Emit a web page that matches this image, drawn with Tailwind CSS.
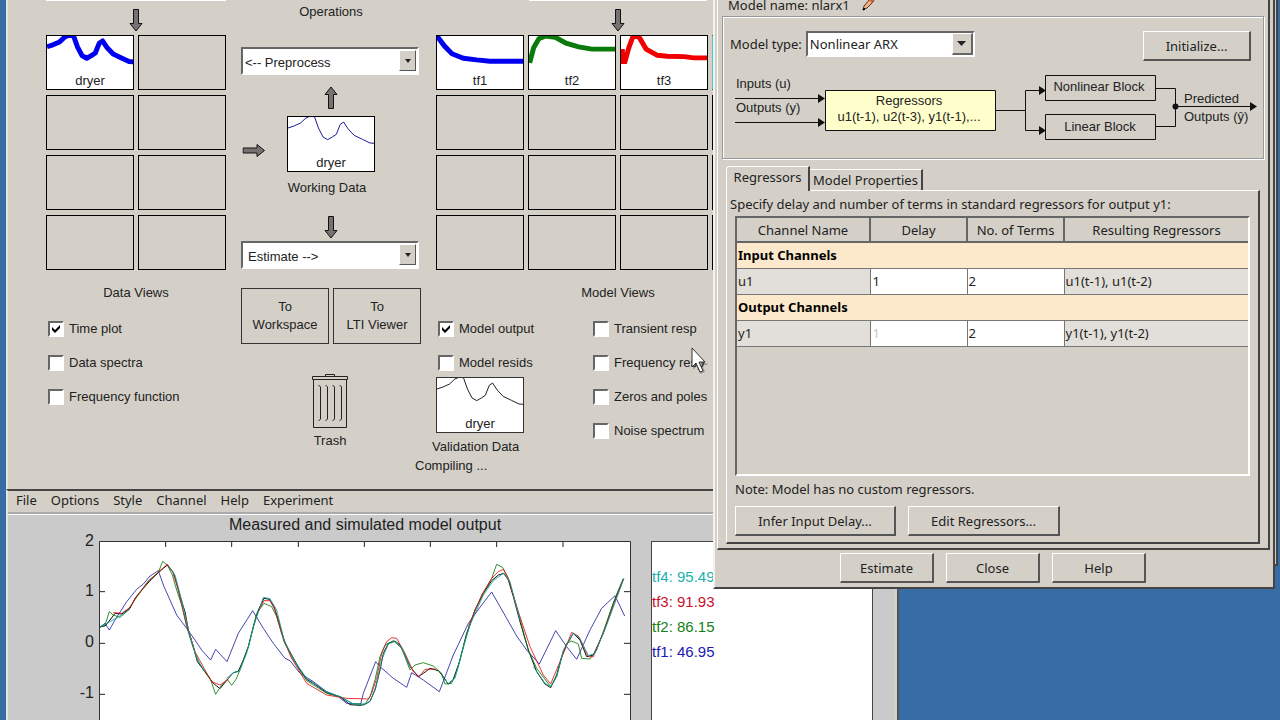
<!DOCTYPE html>
<html lang="en" class="h-full">
<head>
    <meta charset="UTF-8">
    <meta name="viewport" content="width=device-width, initial-scale=1.0">
    <title>System Identification - Nonlinear Models</title>
    <script src="https://cdn.jsdelivr.net/npm/@tailwindcss/browser@4"></script>
</head>
<body class="relative h-screen overflow-hidden bg-[#386ca5] font-['Liberation_Sans',Arial,sans-serif] text-[13px] leading-[18px] text-[#222]">

    <!-- Shared drawings -->
    <svg class="hidden">
        <symbol id="arrow-down" viewBox="0 0 14 23"><path d="M4.500.5h5v14h3.500L7 22 1 14.500h3.500z" fill="#767272" stroke="#111"/></symbol>
        <symbol id="dryer" viewBox="0 0 260 162" preserveAspectRatio="none"><path d="M0 33 18 27 38 18 54 3 66-2 80-1 92 33 106 60 120 68 134 60 146 52 158 22 168 15 182 36 200 55 225 67 248 78 262 79" fill="none" stroke="currentColor" stroke-linejoin="round"/></symbol>
        <symbol id="check" viewBox="0 0 16 16"><path d="M4 6v3l3 3 5-5V4L7 9z" fill="#000"/></symbol>
    </svg>

    <!-- Identification window -->
    <main class="absolute top-0 right-[2px] left-[6px] h-[566px] border-r-2 border-b-2 border-l-2 border-r-[#444] border-b-[#444] border-l-[#e6e4e0] bg-[#d4d0c8]">
        <div class="flex gap-[15px] pl-[38px]">
            <section class="w-[180px] shrink-0">
                <div class="h-px bg-white"></div>
                <svg class="mx-auto mt-2 h-[23px] w-[14px]"><use href="#arrow-down"/></svg>
                <div class="mt-[3px] grid grid-cols-2 gap-x-1 gap-y-[5px]">
                    <div class="relative h-[55px] border border-black bg-white">
                        <svg class="h-full w-full text-[#0000f0] [stroke-width:15]"><use href="#dryer"/></svg>
                        <span class="absolute inset-x-0 -bottom-px text-center">dryer</span>
                    </div>
                    <div class="h-[55px] border border-black"></div>
                    <div class="h-[55px] border border-black"></div>
                    <div class="h-[55px] border border-black"></div>
                    <div class="h-[55px] border border-black"></div>
                    <div class="h-[55px] border border-black"></div>
                    <div class="h-[55px] border border-black"></div>
                    <div class="h-[55px] border border-black"></div>
                </div>
                <h2 class="mt-[14px] text-center">Data Views</h2>
                <div class="mt-[18px] flex flex-col gap-4 pl-[2px]">
                    <label class="flex items-center gap-[5px]"><span class="relative h-4 w-4"><input type="checkbox" checked class="block h-4 w-4 appearance-none border-2 border-t-[#666] border-r-white border-b-white border-l-[#666] bg-white"><svg class="absolute inset-0 h-4 w-4"><use href="#check"/></svg></span>Time plot</label>
                    <label class="flex items-center gap-[5px]"><input type="checkbox" class="h-4 w-4 appearance-none border-2 border-t-[#666] border-r-white border-b-white border-l-[#666] bg-white">Data spectra</label>
                    <label class="flex items-center gap-[5px]"><input type="checkbox" class="h-4 w-4 appearance-none border-2 border-t-[#666] border-r-white border-b-white border-l-[#666] bg-white">Frequency function</label>
                </div>
            </section>

            <section class="w-[180px] shrink-0">
                <h2 class="pt-[3px] text-center">Operations</h2>
                <div class="relative mt-[26px] mr-[2px] h-7">
                    <select aria-label="Preprocess" class="h-full w-full appearance-none border-2 border-t-[#666] border-r-white border-b-white border-l-[#666] bg-white pt-1 pl-[2px]"><option>&lt;-- Preprocess</option></select>
                    <span class="pointer-events-none absolute top-[3px] right-[3px] flex h-[21px] w-[17px] items-center justify-center border border-t-white border-r-[#555] border-b-[#555] border-l-white bg-[#d4d0c8]"><svg class="h-1 w-[6px]" viewBox="0 0 6 4"><path d="M0 0h6L3 4z" fill="#222"/></svg></span>
                </div>
                <svg class="mx-auto mt-[11px] h-[23px] w-[14px] rotate-180"><use href="#arrow-down"/></svg>
                <div class="mt-[7px] flex items-center">
                    <svg class="mr-[26px] ml-[6px] h-[23px] w-[14px] translate-y-[6px] -rotate-90"><use href="#arrow-down"/></svg>
                    <div class="relative h-[56px] w-[88px] border border-black bg-white">
                        <svg class="h-full w-full text-[#1a1a99] [stroke-width:3]"><use href="#dryer"/></svg>
                        <span class="absolute inset-x-0 -bottom-px text-center">dryer</span>
                    </div>
                </div>
                <p class="mt-[7px] pr-2 text-center">Working Data</p>
                <svg class="mx-auto mt-[19px] h-[23px] w-[14px]"><use href="#arrow-down"/></svg>
                <div class="relative mt-[2px] mr-[2px] h-7">
                    <select aria-label="Estimate" class="h-full w-full appearance-none border-2 border-t-[#666] border-r-white border-b-white border-l-[#666] bg-white pt-1 pl-[5px]"><option>Estimate --&gt;</option></select>
                    <span class="pointer-events-none absolute top-[3px] right-[3px] flex h-[21px] w-[17px] items-center justify-center border border-t-white border-r-[#555] border-b-[#555] border-l-white bg-[#d4d0c8]"><svg class="h-1 w-[6px]" viewBox="0 0 6 4"><path d="M0 0h6L3 4z" fill="#222"/></svg></span>
                </div>
                <div class="mt-[19px] grid grid-cols-2 gap-1">
                    <button class="h-14 border border-[#333]">To<br>Workspace</button>
                    <button class="h-14 border border-[#333]">To<br>LTI Viewer</button>
                </div>
                <svg class="mx-auto mt-[29px] h-[56px] w-[38px]" viewBox="0 0 38 56" fill="none" stroke="#222">
                    <path d="M13.500 3.500v-2h9v2M.5 3.500h35v3h-35zM1.500 6.500v48h33v-48M6.500 12l2 2v32l-2 2M13.500 12l2 2v32l-2 2M20.500 12l2 2v32l-2 2M27.500 12l2 2v32l-2 2"/>
                </svg>
                <p class="mt-[3px] pr-[2px] text-center">Trash</p>
            </section>

            <section class="w-[364px] shrink-0">
                <div class="mx-auto h-px w-[178px] bg-white"></div>
                <svg class="mx-auto mt-2 h-[23px] w-[14px]"><use href="#arrow-down"/></svg>
                <div class="mt-[3px] grid grid-cols-4 gap-x-1 gap-y-[5px]">
                    <div class="relative h-[55px] border border-black bg-white">
                        <svg class="h-full w-full" viewBox="0 0 260 162" preserveAspectRatio="none"><path d="M0 0 22 30 45 54 80 68 120 73 160 77H262" fill="none" stroke="#0000f0" stroke-width="15"/></svg>
                        <span class="absolute inset-x-0 -bottom-px text-center">tf1</span>
                    </div>
                    <div class="relative h-[55px] border border-black bg-white">
                        <svg class="h-full w-full" viewBox="0 0 260 162" preserveAspectRatio="none"><path d="M2 82 14 36 30 8 50 0 80 4 112 22 150 33 190 40H262" fill="none" stroke="#0a7a0a" stroke-width="15"/></svg>
                        <span class="absolute inset-x-0 -bottom-px text-center">tf2</span>
                    </div>
                    <div class="relative h-[55px] border border-black bg-white">
                        <svg class="h-full w-full" viewBox="0 0 260 162" preserveAspectRatio="none"><path d="M4 40 5 78 12 78 24 35 36 2 54 2 76 40 110 59 140 62 190 63 220 67H262" fill="none" stroke="#f00000" stroke-width="15"/></svg>
                        <span class="absolute inset-x-0 -bottom-px text-center">tf3</span>
                    </div>
                    <div class="h-[55px] border border-black border-l-[#4cc] bg-white"></div>
                    <div class="h-[55px] border border-black"></div>
                    <div class="h-[55px] border border-black"></div>
                    <div class="h-[55px] border border-black"></div>
                    <div class="h-[55px] border border-black"></div>
                    <div class="h-[55px] border border-black"></div>
                    <div class="h-[55px] border border-black"></div>
                    <div class="h-[55px] border border-black"></div>
                    <div class="h-[55px] border border-black"></div>
                    <div class="h-[55px] border border-black"></div>
                    <div class="h-[55px] border border-black"></div>
                    <div class="h-[55px] border border-black"></div>
                    <div class="h-[55px] border border-black"></div>
                </div>
                <h2 class="mt-[14px] text-center">Model Views</h2>
                <div class="mt-[18px] flex gap-[53px]">
                    <div class="flex w-[104px] flex-col whitespace-nowrap">
                        <label class="flex items-center gap-[5px] pl-[2px]"><span class="relative h-4 w-4"><input type="checkbox" checked class="block h-4 w-4 appearance-none border-2 border-t-[#666] border-r-white border-b-white border-l-[#666] bg-white"><svg class="absolute inset-0 h-4 w-4"><use href="#check"/></svg></span>Model output</label>
                        <label class="mt-4 flex items-center gap-[5px] pl-[2px]"><input type="checkbox" class="h-4 w-4 appearance-none border-2 border-t-[#666] border-r-white border-b-white border-l-[#666] bg-white">Model resids</label>
                        <div class="relative mt-[5px] h-[56px] w-[88px] border border-[#333] bg-white">
                            <svg class="h-full w-full text-[#222] [stroke-width:3]"><use href="#dryer"/></svg>
                            <span class="absolute inset-x-0 -bottom-px text-center">dryer</span>
                        </div>
                        <p class="mt-[5px] -ml-1">Validation Data</p>
                    </div>
                    <div class="flex flex-col gap-4 whitespace-nowrap">
                        <label class="flex items-center gap-[5px]"><input type="checkbox" class="h-4 w-4 appearance-none border-2 border-t-[#666] border-r-white border-b-white border-l-[#666] bg-white">Transient resp</label>
                        <label class="flex items-center gap-[5px]"><input type="checkbox" class="h-4 w-4 appearance-none border-2 border-t-[#666] border-r-white border-b-white border-l-[#666] bg-white">Frequency resp</label>
                        <label class="flex items-center gap-[5px]"><input type="checkbox" class="h-4 w-4 appearance-none border-2 border-t-[#666] border-r-white border-b-white border-l-[#666] bg-white">Zeros and poles</label>
                        <label class="flex items-center gap-[5px]"><input type="checkbox" class="h-4 w-4 appearance-none border-2 border-t-[#666] border-r-white border-b-white border-l-[#666] bg-white">Noise spectrum</label>
                    </div>
                </div>
            </section>
        </div>
        <p class="pt-px pl-[407px]">Compiling ...</p>
    </main>

    <!-- Model output window -->
    <section class="absolute top-[489px] bottom-0 left-[6px] w-[893px] border-t-2 border-r-2 border-l-2 border-t-[#444] border-r-[#555] border-l-[#e6e4e0] bg-[#d4d0c8]">
        <nav class="flex h-[21px] items-start gap-[14px] pl-2 font-['Noto_Sans','DejaVu_Sans',sans-serif] text-[13px]">
            <button>File</button>
            <button>Options</button>
            <button>Style</button>
            <button>Channel</button>
            <button>Help</button>
            <button>Experiment</button>
        </nav>
        <div class="mr-[3px] flex h-[215px] border-t-2 border-t-[#aaa] bg-[#cacaca] text-base shadow-[inset_0_1px_0_#fff]">
            <div class="w-[87px] shrink-0 pt-[18px] pr-[1px] text-right leading-[18px]">
                <p>2</p>
                <p class="mt-8">1</p>
                <p class="mt-[33px]">0</p>
                <p class="mt-[33px]">-1</p>
            </div>
            <div class="ml-1 w-[532px] shrink-0">
                <h2 class="pt-[2px] text-center leading-[18px]">Measured and simulated model output</h2>
                <svg class="mt-[7px] h-[190px] w-[532px]" viewBox="57 93 1596 570" fill="none" stroke-width="3">
                    <path fill="#fff" stroke="#333" d="M58.500 94.500h1593v700H58.500z"/>
                    <path stroke="#222" d="M257 96v15M455 96v15M655 96v15M853 96v15M1051 96v15M1250 96v15M1449 96v15M60 245h15M60 400h15M60 553h15M1632 245h18M1632 400h18M1632 553h18"/>
                    <path stroke="#111" d="M60 350 75 348 90 330 105 310 125 312 150 295 165 265 190 235 210 212 235 188 250 175 262 165 280 187 290 220 300 260 315 305 325 360 340 410 352 455 375 485 400 520 420 536 445 505 460 488 475 484 490 450 505 410 520 350 535 300 552 265 568 268 582 290 595 330 615 400 635 435 660 480 680 508 700 520 740 548 780 560 810 584 840 586 853 584 870 574 885 540 900 480 910 430 925 400 945 393 960 405 975 435 990 470 1015 500 1030 490 1050 475 1075 482 1090 500 1105 523 1120 508 1140 450 1160 370 1185 300 1210 250 1235 212 1255 195 1272 190 1285 210 1300 260 1320 335 1345 420 1370 485 1395 522 1412 533 1430 495 1445 440 1460 405 1480 370 1500 390 1520 440 1540 435 1570 370 1600 280 1630 208"/>
                    <path stroke="#2020a0" stroke-width="2.500" d="M60 352 75 340 88 360 105 330 140 275 170 238 190 222 210 198 235 182 250 225 290 315 320 355 345 390 365 420 392 450 407 418 441 455 475 370 518 302 550 355 580 400 615 445 630 452 660 490 700 515 740 545 775 560 800 580 842 582 850 550 887 455 900 470 940 505 980 532 995 488 1030 510 1078 545 1120 435 1165 340 1205 285 1235 246 1280 325 1310 378 1340 420 1378 462 1427 362 1460 410 1490 448 1530 360 1565 295 1605 257 1634 318"/>
                    <path stroke="#0a7a0a" stroke-width="2.500" d="M60 352 75 345 88 305 100 315 120 322 140 305 170 262 205 212 235 188 248 154 262 165 277 195 290 240 305 285 320 350 340 415 360 465 392 510 407 553 425 525 442 508 455 526 468 508 480 480 505 410 530 310 552 280 575 290 590 320 612 395 640 450 680 512 740 550 785 562 820 582 855 582 870 560 885 510 900 440 915 405 940 392 965 415 990 480 1005 465 1030 458 1060 468 1085 490 1095 522 1115 520 1132 480 1155 390 1185 300 1215 240 1235 205 1250 163 1268 172 1285 205 1310 290 1345 420 1370 475 1412 530 1430 500 1450 425 1460 400 1475 393 1495 402 1505 445 1530 447 1550 420 1575 350 1605 265 1630 205"/>
                    <path stroke="#e01010" stroke-width="2.500" d="M100 308 125 310 150 292 170 258 205 215 235 186 262 163 278 185 295 240 320 345 345 425 375 480 395 515 420 525 445 508M535 305 552 272 570 272 585 300 605 370 632 440 680 520 740 555 800 565 865 567 875 550 890 505 905 430 920 395 935 383 950 385 975 430 1000 485 1018 500 1035 478 1065 477M1165 350 1205 255 1235 205 1255 185 1270 178 1285 205 1310 290 1350 410 1390 495 1412 522 1440 455 1475 367 1495 378 1510 410 1525 440 1540 440 1575 355 1630 208"/>
                    <path stroke="#10a0a0" stroke-width="2.500" d="M60 350 90 335 125 315 150 298M265 170 285 195 305 270 325 358 350 445 375 485M440 505 460 488 478 484 500 430 522 345 550 262 570 266 590 300 612 390 645 455 680 505 740 545 785 562 815 580 850 584 870 574 888 530 905 450 925 402 945 394 965 412 990 470M1085 500 1105 520 1125 505 1145 430 1170 345 1210 255 1240 212 1270 190 1290 215 1320 330M1360 470 1395 520 1412 530 1430 500 1450 420 1480 370 1500 385 1525 437 1545 430 1580 345 1632 205"/>
                </svg>
            </div>
            <div class="mt-[27px] ml-5 w-[222px] shrink-0 border border-[#444] bg-white pt-[22px] text-[15px] leading-[25px]">
                <p class="text-[#20b0b0]">tf4: 95.49</p>
                <p class="text-[#c8102c]">tf3: 91.93</p>
                <p class="text-[#148014]">tf2: 86.15</p>
                <p class="text-[#2018b8]">tf1: 46.95</p>
            </div>
        </div>
    </section>

    <!-- Nonlinear models dialog -->
    <section class="absolute top-0 left-[713px] w-[562px] border-r-2 border-b-2 border-l-2 border-r-[#444] border-b-[#444] border-l-[#f4f2ee] bg-[#d4d0c8] font-['Noto_Sans','DejaVu_Sans',sans-serif] text-[13px]">
        <div class="mr-[3px] ml-[2px] border-r-2 border-b-2 border-l border-r-[#444] border-b-[#444] border-l-white px-[4px] pb-[4px]">
            <div class="-mt-1 flex h-5 items-start gap-3 pl-[6px]">
                <span>Model name: nlarx1</span>
                <svg class="mt-[2px] h-[13px] w-[13px]" viewBox="0 0 13 13"><path d="M1 12l1-4 6-7q3-1 4 2l-7 7z" fill="#f0b080" stroke="#553322"/><path d="M8 1q3-1 4 2l-2 2-3-3z" fill="#c86030"/><path d="M1 12l2-1-1-1z" stroke="#000"/></svg>
            </div>
            <div class="border border-[#999] shadow-[inset_1px_1px_0_#fff,1px_1px_0_#fff]">
                <div class="flex items-start justify-between pt-[14px] pr-3 pl-[7px]">
                    <div class="flex items-center gap-1">
                        <label for="model-type">Model type:</label>
                        <div class="relative h-[26px] w-[169px]">
                            <select id="model-type" class="h-full w-full appearance-none border-2 border-t-[#666] border-r-white border-b-white border-l-[#666] bg-white pl-[2px]"><option>Nonlinear ARX</option></select>
                            <span class="pointer-events-none absolute top-[2px] right-[2px] flex h-[22px] w-[21px] items-center justify-center border-t border-r-2 border-b-2 border-l border-t-white border-r-[#666] border-b-[#666] border-l-white bg-[#d4d0c8]"><svg class="h-[5px] w-[9px]" viewBox="0 0 9 5"><path d="M0 0h9L4.500 5z" fill="#222"/></svg></span>
                        </div>
                    </div>
                    <button class="h-[30px] w-[108px] border-t border-r-2 border-b-2 border-l border-t-white border-r-[#555] border-b-[#555] border-l-white">Initialize...</button>
                </div>
                <svg class="mt-3 ml-[7px] h-[85px] w-[530px] font-['Liberation_Sans',Arial,sans-serif] text-[13px]" viewBox="730 73 530 85" fill="none" stroke="#111">
                    <path d="M735 98.500h84M735 122.500h84M996 110.500h30M1041 90.500h-15.500v40H1041M1156 88.500h19.500v38H1156M1176 106.500h75"/>
                    <path fill="#111" stroke="none" d="M818 94l7 4.500-7 4.500zM818 118l7 4.500-7 4.500zM1039 86l7 4.500-7 4.500zM1039 126l7 4.500-7 4.500zM1250 102l7 4.500-7 4.500z"/>
                    <circle cx="1175.500" cy="106.500" r="3" fill="#111" stroke="none"/>
                    <path fill="#ffffcc" d="M825.500 90.500h170v40h-170z"/>
                    <path d="M1045.500 75.500h110v25h-110zM1045.500 114.500h110v25h-110z"/>
                    <g fill="#222" stroke="none">
                        <text x="736" y="88">Inputs (u)</text>
                        <text x="736" y="112">Outputs (y)</text>
                        <text x="909" y="105" text-anchor="middle">Regressors</text>
                        <text x="909" y="121" text-anchor="middle">u1(t-1), u2(t-3), y1(t-1),...</text>
                        <text x="1099" y="91" text-anchor="middle">Nonlinear Block</text>
                        <text x="1100" y="131" text-anchor="middle">Linear Block</text>
                        <text x="1184" y="103">Predicted</text>
                        <text x="1184" y="121">Outputs (ŷ)</text>
                    </g>
                </svg>
            </div>

            <div role="tablist" class="mt-[7px] ml-1 flex items-end">
                <button role="tab" aria-selected="true" class="-mb-px h-[25px] w-[84px] rounded-tl border-t border-r-2 border-l border-t-white border-r-[#444] border-l-white bg-[#d4d0c8] pb-1">Regressors</button>
                <button role="tab" class="h-[21px] w-[113px] border-t border-r-2 border-t-white border-r-[#444]">Model Properties</button>
            </div>
            <div class="mr-1 ml-1 border-t border-r-2 border-b-2 border-l border-t-white border-r-[#444] border-b-[#444] border-l-white px-2 pt-1 pb-[6px]">
                <p class="-ml-[5px] whitespace-nowrap">Specify delay and number of terms in standard regressors for output y1:</p>
                <div class="mt-[3px] h-[260px] border-2 border-t-[#666] border-r-white border-b-white border-l-[#666]">
                    <table class="w-full table-fixed border-collapse text-left">
                        <colgroup>
                            <col class="w-[133px]">
                            <col class="w-[97px]">
                            <col class="w-[97px]">
                            <col>
                        </colgroup>
                        <thead>
                            <tr class="h-[24px] text-center">
                                <th class="border-r-2 border-b-2 border-[#666] font-normal">Channel Name</th>
                                <th class="border-r-2 border-b-2 border-[#666] font-normal">Delay</th>
                                <th class="border-r-2 border-b-2 border-[#666] font-normal">No. of Terms</th>
                                <th class="border-b-2 border-[#666] font-normal">Resulting Regressors</th>
                            </tr>
                        </thead>
                        <tbody>
                            <tr class="h-[26px] border-b border-[#777] bg-[#fce8ca] text-black">
                                <th colspan="4" class="pl-px">Input Channels</th>
                            </tr>
                            <tr class="h-[26px] border-b border-[#777] bg-[#e2dfda]">
                                <td class="border-r border-[#777] pl-px">u1</td>
                                <td class="border-r border-[#777] bg-white pl-[2px]">1</td>
                                <td class="border-r border-[#777] bg-white pl-px">2</td>
                                <td class="pl-px">u1(t-1), u1(t-2)</td>
                            </tr>
                            <tr class="h-[26px] border-b border-[#777] bg-[#fce8ca] text-black">
                                <th colspan="4" class="pl-px">Output Channels</th>
                            </tr>
                            <tr class="h-[26px] border-b border-[#777] bg-[#e2dfda]">
                                <td class="border-r border-[#777] pl-px">y1</td>
                                <td class="border-r border-[#777] bg-white pl-[2px] text-[#c8c8c8]">1</td>
                                <td class="border-r border-[#777] bg-white pl-px">2</td>
                                <td class="pl-px">y1(t-1), y1(t-2)</td>
                            </tr>
                        </tbody>
                    </table>
                </div>
                <p class="mt-1">Note: Model has no custom regressors.</p>
                <div class="mt-2 flex gap-3">
                    <button class="h-[30px] w-[161px] border-t border-r-2 border-b-2 border-l border-t-white border-r-[#555] border-b-[#555] border-l-white">Infer Input Delay...</button>
                    <button class="h-[30px] w-[152px] border-t border-r-2 border-b-2 border-l border-t-white border-r-[#555] border-b-[#555] border-l-white">Edit Regressors...</button>
                </div>
            </div>
        </div>
        <div class="flex justify-center gap-3 pt-[3px] pr-[2px] pb-[4px]">
            <button class="h-[30px] w-[94px] border-t border-r-2 border-b-2 border-l border-t-white border-r-[#555] border-b-[#555] border-l-white">Estimate</button>
            <button class="h-[30px] w-[94px] border-t border-r-2 border-b-2 border-l border-t-white border-r-[#555] border-b-[#555] border-l-white">Close</button>
            <button class="h-[30px] w-[94px] border-t border-r-2 border-b-2 border-l border-t-white border-r-[#555] border-b-[#555] border-l-white">Help</button>
        </div>
    </section>

    <!-- Mouse pointer -->
    <svg class="absolute top-[347px] left-[691px] h-[28px] w-[18px]" viewBox="0 0 18 28"><path d="M2 4v19l4-4 3 8 5-2-3-7h6z" fill="#000" opacity=".25"/><path d="M1 1v19l4-4 4 9 3-1-4-9h6z" fill="#fff" stroke="#333"/></svg>
</body>
</html>
